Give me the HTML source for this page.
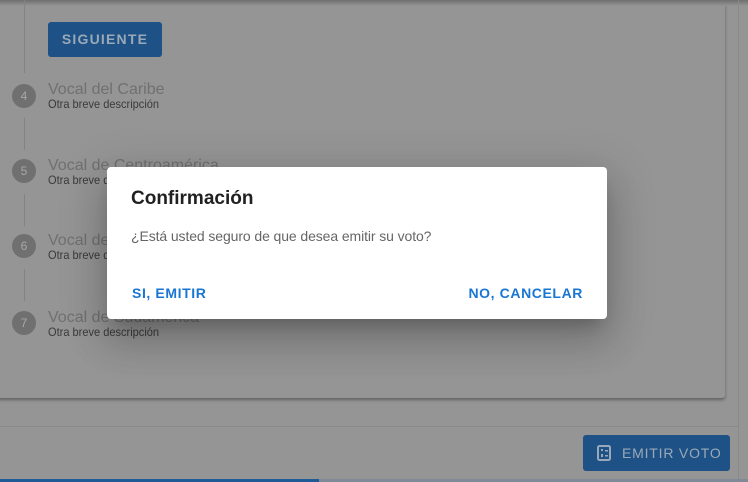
<!DOCTYPE html>
<html><head><style>
body{margin:0;width:748px;height:482px;overflow:hidden;background:#959595;font-family:"Liberation Sans",sans-serif;position:relative}
.abs{position:absolute}
.top{left:0;top:0;width:748px;height:6px;background:linear-gradient(#6f6f6f,#959595)}
.card{left:-10px;top:-10px;width:735px;height:408px;box-shadow:0 2px 3px rgba(0,0,0,.35);border-radius:3px;background:#959595}
.vl{width:1px;background:#838383;left:24px}
.c{left:12px;width:24px;height:24px;border-radius:50%;background:#707070;color:#a8a8a8;font-size:12px;text-align:center;line-height:24px}
.t{left:48px;font-size:16px;color:#707070;white-space:nowrap}
.d{left:48px;font-size:12px;color:#3a3a3a;transform:scaleX(.92);transform-origin:left;white-space:nowrap}
.btn{background:#1e5185;color:#9aa9b8;border-radius:3px;font-size:14px;font-weight:bold;letter-spacing:1.2px;text-align:center}
.dlg{left:107px;top:167px;width:500px;height:152px;background:#fff;border-radius:4px;box-shadow:0 11px 15px -7px rgba(0,0,0,.2),0 24px 38px 3px rgba(0,0,0,.14),0 9px 46px 8px rgba(0,0,0,.12)}
.db{color:#1976d2;font-size:14px;font-weight:bold;letter-spacing:0.6px;top:118px}
</style></head><body>
<div class="abs card"></div>
<div class="abs top"></div>
<div class="abs vl" style="top:0;height:73px"></div>
<div class="abs btn" style="left:48px;top:22px;width:114px;height:35px;line-height:35px">SIGUIENTE</div>
<div class="abs vl" style="top:118px;height:32px"></div>
<div class="abs vl" style="top:194px;height:32px"></div>
<div class="abs vl" style="top:269px;height:32px"></div>
<div class="abs c" style="top:84px">4</div>
<div class="abs t" style="top:81px">Vocal del Caribe</div>
<div class="abs d" style="top:97px">Otra breve descripción</div>
<div class="abs c" style="top:159px">5</div>
<div class="abs t" style="top:157px">Vocal de Centroamérica</div>
<div class="abs d" style="top:173px">Otra breve descripción</div>
<div class="abs c" style="top:234px">6</div>
<div class="abs t" style="top:232px">Vocal de Norteamérica</div>
<div class="abs d" style="top:248px">Otra breve descripción</div>
<div class="abs c" style="top:311px">7</div>
<div class="abs t" style="top:309px">Vocal de Sudamérica</div>
<div class="abs d" style="top:325px">Otra breve descripción</div>
<div class="abs" style="left:738px;top:0;width:1px;height:482px;background:#8a8a8a"></div>
<div class="abs" style="left:0;top:426px;width:738px;height:1px;background:#8a8a8a"></div>
<div class="abs btn" style="left:583px;top:435px;width:147px;height:36px;line-height:36px;font-weight:normal;letter-spacing:0.8px;text-align:left">
<svg class="abs" style="left:14px;top:10px" width="14" height="16" viewBox="0 0 14 16"><rect x="1" y="1" width="12" height="14" rx="1.5" fill="none" stroke="#9aa9b8" stroke-width="2"/><rect x="4" y="4" width="2" height="2" fill="#9aa9b8"/><rect x="4" y="9" width="2" height="3" fill="#9aa9b8"/><rect x="8" y="5" width="3" height="1.5" fill="#9aa9b8"/><rect x="8" y="10" width="3" height="1.5" fill="#9aa9b8"/></svg>
<span class="abs" style="left:39px;top:0">EMITIR VOTO</span></div>
<div class="abs" style="left:0;top:479px;width:748px;height:3px;background:#7f8a96"></div>
<div class="abs" style="left:0;top:479px;width:319px;height:3px;background:#1e5b96"></div>
<div class="abs dlg">
<div class="abs" style="left:24px;top:21px;font-size:19px;font-weight:bold;color:#212121">Confirmación</div>
<div class="abs" style="left:24px;top:61px;font-size:14px;color:#666;letter-spacing:-0.1px">¿Está usted seguro de que desea emitir su voto?</div>
<div class="abs db" style="left:25px">SI, EMITIR</div>
<div class="abs db" style="right:24px">NO, CANCELAR</div>
</div>
</body></html>
